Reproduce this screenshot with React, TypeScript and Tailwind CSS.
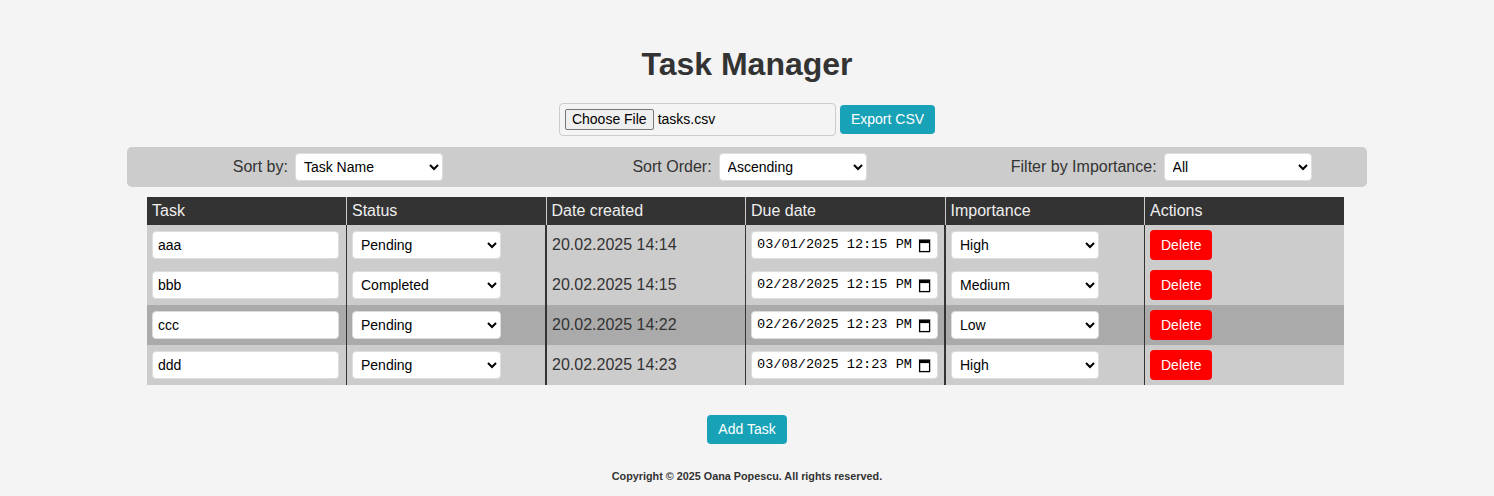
import React from 'react';

type Task = { name: string; status: string; created: string; due: string; importance: string };

const tasks: Task[] = [
    { name: 'aaa', status: 'Pending', created: '20.02.2025 14:14', due: '03/01/2025 12:15 PM', importance: 'High' },
    { name: 'bbb', status: 'Completed', created: '20.02.2025 14:15', due: '02/28/2025 12:15 PM', importance: 'Medium' },
    { name: 'ccc', status: 'Pending', created: '20.02.2025 14:22', due: '02/26/2025 12:23 PM', importance: 'Low' },
    { name: 'ddd', status: 'Pending', created: '20.02.2025 14:23', due: '03/08/2025 12:23 PM', importance: 'High' },
];

function CalendarIcon() {
    return (
        <svg width="13" height="15" viewBox="0 0 13 15" className="shrink-0">
            <rect x="1.6" y="2.1" width="10" height="11.5" fill="none" stroke="#000" strokeWidth="1.3" />
            <rect x="1.6" y="2.1" width="10" height="3" fill="#000" />
        </svg>
    );
}

function Select({ value, options, width }: { value: string; options: string[]; width: string }) {
    return (
        <select
            defaultValue={value}
            className={`${width} h-[28px] bg-white rounded-[4px] border border-[#ddd] pl-[4px] text-[14px] text-black`}
        >
            {options.map((o) => (
                <option key={o}>{o}</option>
            ))}
        </select>
    );
}

export default function App() {
    return (
        <div className="min-h-[496px] bg-[#f4f4f4] text-[#333] font-['Liberation_Sans',Arial,sans-serif] flex flex-col items-center">
            <h1 className="mt-[46px] text-[32px] leading-[37px] font-bold text-[#333]">Task Manager</h1>

            <div className="mt-[20px] flex items-center gap-[4px]">
                <div className="w-[277px] h-[33px] flex items-center gap-[4px] px-[5px] border border-[#ccc] rounded-[4px] text-[14px] text-black">
                    <span className="h-[21px] px-[6px] flex items-center bg-[#efefef] border border-[#767676] rounded-[2px]">
                        Choose File
                    </span>
                    <span>tasks.csv</span>
                </div>
                <button className="h-[29px] px-[11px] bg-[#17a2b8] text-white text-[14px] rounded-[4px]">Export CSV</button>
            </div>

            <div className="mt-[11px] w-[1240px] h-[40px] bg-[#ccc] rounded-[5px] pl-[5px] flex items-center text-[16px] text-[#333]">
                <div className="flex-1 flex justify-center items-center gap-[7px]">
                    <span>Sort by:</span>
                    <Select value="Task Name" options={['Task Name', 'Status', 'Date created', 'Due date', 'Importance']} width="w-[148px]" />
                </div>
                <div className="flex-1 flex justify-center items-center gap-[7px]">
                    <span>Sort Order:</span>
                    <Select value="Ascending" options={['Ascending', 'Descending']} width="w-[148px]" />
                </div>
                <div className="flex-1 flex justify-center items-center gap-[7px]">
                    <span>Filter by Importance:</span>
                    <Select value="All" options={['All', 'High', 'Medium', 'Low']} width="w-[148px]" />
                </div>
            </div>

            <table className="mt-[10px] mr-[3px] w-[1197px] table-fixed border-collapse text-[16px]">
                <thead>
                    <tr className="bg-[#333] text-[#eee] text-left">
                        <th className="font-normal px-[5px] h-[28px] leading-[18px]">Task</th>
                        <th className="font-normal px-[5px] h-[28px] leading-[18px] border-l border-[#ccc]">Status</th>
                        <th className="font-normal px-[5px] h-[28px] leading-[18px] border-l border-[#ccc]">Date created</th>
                        <th className="font-normal px-[5px] h-[28px] leading-[18px] border-l border-[#ccc]">Due date</th>
                        <th className="font-normal px-[5px] h-[28px] leading-[18px] border-l border-[#ccc]">Importance</th>
                        <th className="font-normal px-[5px] h-[28px] leading-[18px] border-l border-[#ccc]">Actions</th>
                    </tr>
                </thead>
                <tbody>
                    {tasks.map((t, i) => (
                        <tr key={t.name} className={i === 2 ? 'bg-[#aaa]' : 'bg-[#ccc]'}>
                            <td className="h-[40px] px-[5px]">
                                <div className="w-[187px] h-[28px] bg-white rounded-[4px] border border-[#ddd] px-[5px] flex items-center text-[14px] text-black">
                                    {t.name}
                                </div>
                            </td>
                            <td className="h-[40px] px-[5px] border-l border-[#333]">
                                <Select value={t.status} options={['Pending', 'In Progress', 'Completed']} width="w-[149px]" />
                            </td>
                            <td className="h-[40px] px-[5px] border-l-2 border-[#333] text-[#333]">{t.created}</td>
                            <td className="h-[40px] px-[5px] border-l border-[#333]">
                                <div className="w-[187px] h-[28px] bg-white rounded-[4px] border border-[#ddd] pl-[5px] pr-[6px] flex items-center justify-between text-[13.6px] text-black font-['Liberation_Mono',monospace]">
                                    <span>{t.due}</span>
                                    <CalendarIcon />
                                </div>
                            </td>
                            <td className="h-[40px] px-[5px] border-l-2 border-[#333]">
                                <Select value={t.importance} options={['High', 'Medium', 'Low']} width="w-[148px]" />
                            </td>
                            <td className="h-[40px] px-[5px] border-l border-[#333]">
                                <button className="h-[30px] px-[11px] bg-[#ff0000] text-white text-[14px] rounded-[4px]">Delete</button>
                            </td>
                        </tr>
                    ))}
                </tbody>
            </table>

            <button className="mt-[30px] h-[29px] px-[11px] bg-[#17a2b8] text-white text-[14px] rounded-[4px]">Add Task</button>

            <p className="mt-[24px] text-[10.8px] font-bold text-[#333]">Copyright © 2025 Oana Popescu. All rights reserved.</p>
        </div>
    );
}
